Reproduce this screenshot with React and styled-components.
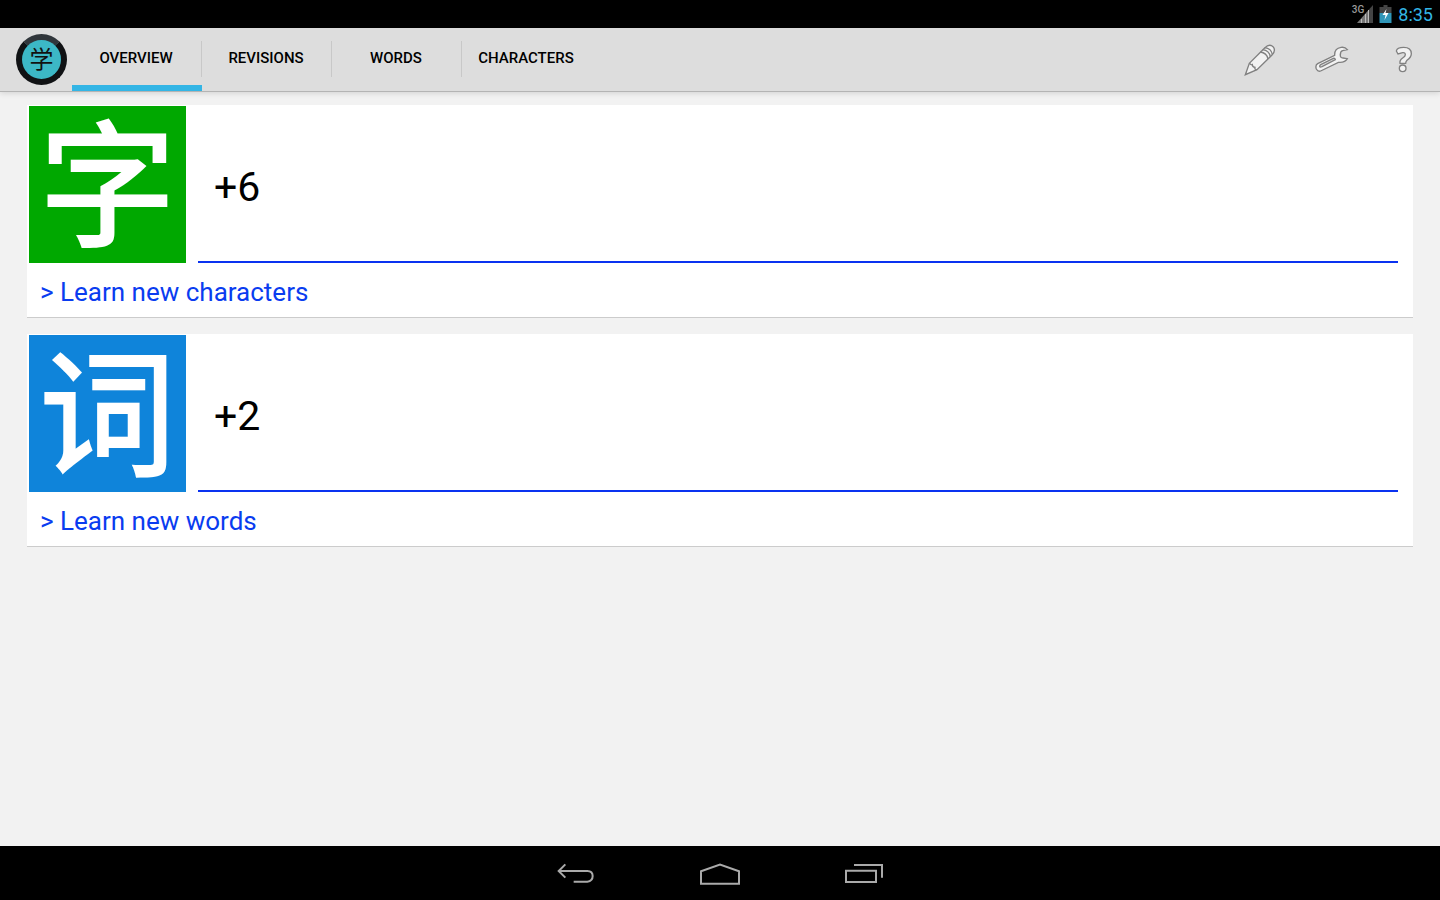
import React from "react";
import styled, { createGlobalStyle } from "styled-components";

const GlobalStyle = createGlobalStyle`
  * {
    box-sizing: border-box;
  }

  body {
    margin: 0;
    background: #f2f2f2;
    font-family: Roboto, "Noto Sans CJK SC", sans-serif;
  }
`;

const Screen = styled.div`
  display: flex;
  flex-direction: column;
  min-height: 100vh;
`;

const StatusBar = styled.div`
  display: flex;
  align-items: center;
  justify-content: flex-end;
  gap: 6px;
  height: 28px;
  padding: 0 7px;
  background: #000;
`;

const Clock = styled.time`
  padding-top: 2px;
  color: #33b5e5;
  font-size: 18px;
  line-height: 28px;
`;

const Signal = styled.div`
  display: flex;
  align-items: center;
`;

const Network = styled.span`
  align-self: flex-start;
  margin-right: -7px;
  color: #999;
  font-size: 10px;
  font-weight: 500;
  line-height: 10px;
`;

const ActionBar = styled.header`
  display: flex;
  align-items: center;
  height: 64px;
  padding: 0 12px 0 16px;
  background: #ddd;
  border-bottom: 1px solid #b4b4b4;
  box-shadow: 0 1px 6px rgba(0, 0, 0, 0.14);
`;

const Logo = styled.div`
  display: flex;
  align-items: center;
  justify-content: center;
  width: 51px;
  height: 51px;
  margin-right: 5px;
  border: 6px solid #101214;
  border-top-color: #30363b;
  border-radius: 50%;
  background: #3cb8c6;
  color: #111;
  font-size: 24px;
  line-height: 24px;
`;

const Tabs = styled.nav`
  display: flex;
  flex: 1;
  height: 100%;
`;

const Tab = styled.button`
  width: 130px;
  padding: 2px 2px 0 0;
  border: 0;
  border-bottom: 6px solid ${(props) => (props.$active ? "#33b5e5" : "transparent")};
  background: none;
  color: #000;
  font-family: inherit;
  font-size: 15px;
  font-weight: 500;
`;

const Divider = styled.span`
  width: 1px;
  height: 36px;
  margin: 13px 0 0 -1px;
  background: #c8c8c8;
`;

const Actions = styled.div`
  display: flex;
  gap: 24px;
`;

const IconButton = styled.button`
  display: flex;
  align-items: center;
  justify-content: center;
  width: 48px;
  height: 48px;
  padding: 0;
  border: 0;
  background: none;
`;

const Content = styled.main`
  display: flex;
  flex: 1;
  flex-direction: column;
  gap: 16px;
  padding: 13px 27px;
`;

const Card = styled.section`
  padding: 1px 2px 0;
  background: #fff;
  border-bottom: 1px solid #ccc;
`;

const CardTop = styled.div`
  display: flex;
  gap: 12px;
  padding-right: 13px;
`;

const Tile = styled.div`
  display: flex;
  align-items: center;
  justify-content: center;
  width: 157px;
  height: 157px;
  padding-top: 10px;
  background: ${(props) => props.$color};
  color: #fff;
  font-size: 138px;
  font-weight: 500;
  line-height: 147px;
`;

const Count = styled.p`
  flex: 1;
  height: 157px;
  margin: 0;
  padding: 0 16px;
  border-bottom: 2px solid #0a32f0;
  color: #000;
  font-size: 41px;
  line-height: 162px;
`;

const LearnLink = styled.a`
  display: block;
  padding: 4px 11px 0;
  color: #0a3cf0;
  font-size: 26px;
  line-height: 50px;
  text-decoration: none;
`;

const NavBar = styled.footer`
  display: flex;
  align-items: center;
  justify-content: center;
  gap: 64px;
  height: 54px;
  padding-top: 2px;
  background: #000;
`;

const NavButton = styled(IconButton)`
  width: 80px;
`;

const SignalIcon = () => (
  <svg width="16" height="18" viewBox="0 0 16 18">
    <path d="M12 4.500 16 0V18H12z" fill="#444" />
    <path d="M0 18 12 4.500V18z" fill="#777" />
    <path d="M4.500 14v4M8.500 9v9M11.500 5v13" stroke="#bbb" strokeWidth="1" />
  </svg>
);

const BatteryIcon = () => (
  <svg width="13" height="18" viewBox="0 0 12 18">
    <path d="M4 0h4v2h4v6H0V2h4z" fill="#444" />
    <path d="M0 8h12v10H0z" fill="#3096b8" />
    <path d="M7 4 3 10h3l-1 5 4-7H6z" fill="#fff" />
  </svg>
);

const PencilIcon = () => (
  <svg width="32" height="32" viewBox="72 130 96 96" fill="#f2f2f2" stroke="#808080" strokeWidth="4">
    <path d="M76 222 88 188 134 142Q148 128 159 138 169 149 156 163L111 207z" />
    <path d="M88 188Q94 194 97 192 97 199 105 200 103 207 111 207M121 154Q140 156 144 175M128 147Q148 150 151 168M134 141Q155 144 157 162" fill="none" />
  </svg>
);

const WrenchIcon = () => (
  <svg width="34" height="28" viewBox="286 138 102 84" fill="#f2f2f2" stroke="#808080" strokeWidth="4">
    <path d="M294 191 345 166Q344 145 364 142 376 140 383 149L369 152Q362 154 362 164 361 174 370 174L383 176Q376 189 356 187L303 213Q295 216 290 207 286 196 294 191z" />
    <path d="M303 194 341 175Q346 174 347 179L307 200Q300 203 300 199 300 196 303 194z" fill="#ddd" />
  </svg>
);

const HelpIcon = () => (
  <svg width="18" height="28" viewBox="526 138 54 84" fill="#f2f2f2" stroke="#808080" strokeWidth="4">
    <path d="M530 153Q532 142 552 142 575 142 575 161 575 171 562 181 558 185 558 190L541 190Q539 181 549 174 557 169 557 164 557 157 549 158L535 162z" />
    <circle cx="549" cy="205" r="10" />
  </svg>
);

const BackIcon = () => (
  <svg width="38" height="22" viewBox="52 72 114 66" fill="none" stroke="#aaa" strokeWidth="6">
    <path d="M102 128H143Q159 126 159 111 159 96 143 96H56M77 76 57 96 77 116" />
  </svg>
);

const HomeIcon = () => (
  <svg width="42" height="22" viewBox="477 67 126 66" fill="none" stroke="#aaa" strokeWidth="6">
    <path d="M483 129V92L540 72 597 92V129z" />
  </svg>
);

const RecentIcon = () => (
  <svg width="40" height="22" viewBox="915 72 120 66" fill="none" stroke="#aaa" strokeWidth="6">
    <path d="M921 95H1011V129H921zM945 78H1029V116" />
  </svg>
);

const tabs = ["OVERVIEW", "REVISIONS", "WORDS", "CHARACTERS"];

const cards = [
  { glyph: "字", color: "#00a800", count: "+6", label: "> Learn new characters" },
  { glyph: "词", color: "#0f84da", count: "+2", label: "> Learn new words" },
];

const App = () => {
  return (
    <Screen>
      <GlobalStyle />
      <StatusBar>
        <Signal>
          <Network>3G</Network>
          <SignalIcon />
        </Signal>
        <BatteryIcon />
        <Clock>8:35</Clock>
      </StatusBar>

      <ActionBar>
        <Logo>学</Logo>
        <Tabs>
          {tabs.map((tab, index) => (
            <React.Fragment key={tab}>
              {index > 0 && <Divider />}
              <Tab type="button" $active={index === 0}>
                {tab}
              </Tab>
            </React.Fragment>
          ))}
        </Tabs>
        <Actions>
          <IconButton type="button" aria-label="Write">
            <PencilIcon />
          </IconButton>
          <IconButton type="button" aria-label="Settings">
            <WrenchIcon />
          </IconButton>
          <IconButton type="button" aria-label="Help">
            <HelpIcon />
          </IconButton>
        </Actions>
      </ActionBar>

      <Content>
        {cards.map((card) => (
          <Card key={card.glyph}>
            <CardTop>
              <Tile $color={card.color}>{card.glyph}</Tile>
              <Count>{card.count}</Count>
            </CardTop>
            <LearnLink href="#">{card.label}</LearnLink>
          </Card>
        ))}
      </Content>

      <NavBar>
        <NavButton type="button" aria-label="Back">
          <BackIcon />
        </NavButton>
        <NavButton type="button" aria-label="Home">
          <HomeIcon />
        </NavButton>
        <NavButton type="button" aria-label="Recent apps">
          <RecentIcon />
        </NavButton>
      </NavBar>
    </Screen>
  );
};

export default App;
